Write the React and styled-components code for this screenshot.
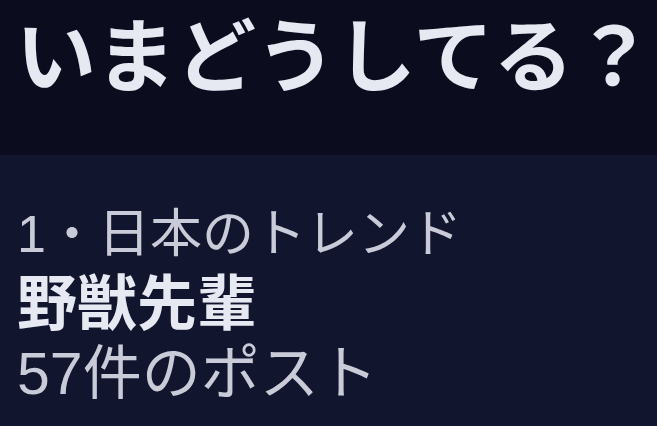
import React from "react";
import styled, { createGlobalStyle } from "styled-components";

const Global = createGlobalStyle`
  html, body { margin: 0; padding: 0; background: #12152e; }
  body { width: 657px; height: 426px; overflow: hidden; }
`;

const Page = styled.div`
  display: flex;
  flex-direction: column;
  width: 657px;
  height: 426px;
  font-family: "Liberation Sans", "Noto Sans CJK JP", sans-serif;
`;

const Header = styled.header`
  height: 155px;
  background: #0b0d1e;
  padding: 0 0 0 16px;
  box-sizing: border-box;
`;

const Title = styled.h1`
  margin: 0;
  font-family: "Noto Sans CJK JP", sans-serif;
  font-weight: 700;
  font-size: 80px;
  line-height: 100px;
  color: #e6e8f2;
  white-space: nowrap;
`;

const Trend = styled.section`
  flex: 1;
  background: #12152e;
  padding: 48px 0 0 17px;
  display: flex;
  flex-direction: column;
`;

const Meta = styled.div`
  font-size: ${(p) => p.$size}px;
  line-height: ${(p) => p.$lh}px;
  color: #c9cbd8;
  font-weight: 400;
  white-space: nowrap;
`;

const Name = styled.div`
  font-size: 60px;
  line-height: 80px;
  font-weight: 700;
  color: #e6e8f2;
  white-space: nowrap;
`;

export default function App() {
  return (
    <>
      <Global />
      <Page>
        <Header>
          <Title>いまどうしてる？</Title>
        </Header>
        <Trend>
          <Meta $size={52} $lh={62}>1・日本のトレンド</Meta>
          <Name>野獣先輩</Name>
          <Meta $size={59} $lh={59}>57件のポスト</Meta>
        </Trend>
      </Page>
    </>
  );
}
